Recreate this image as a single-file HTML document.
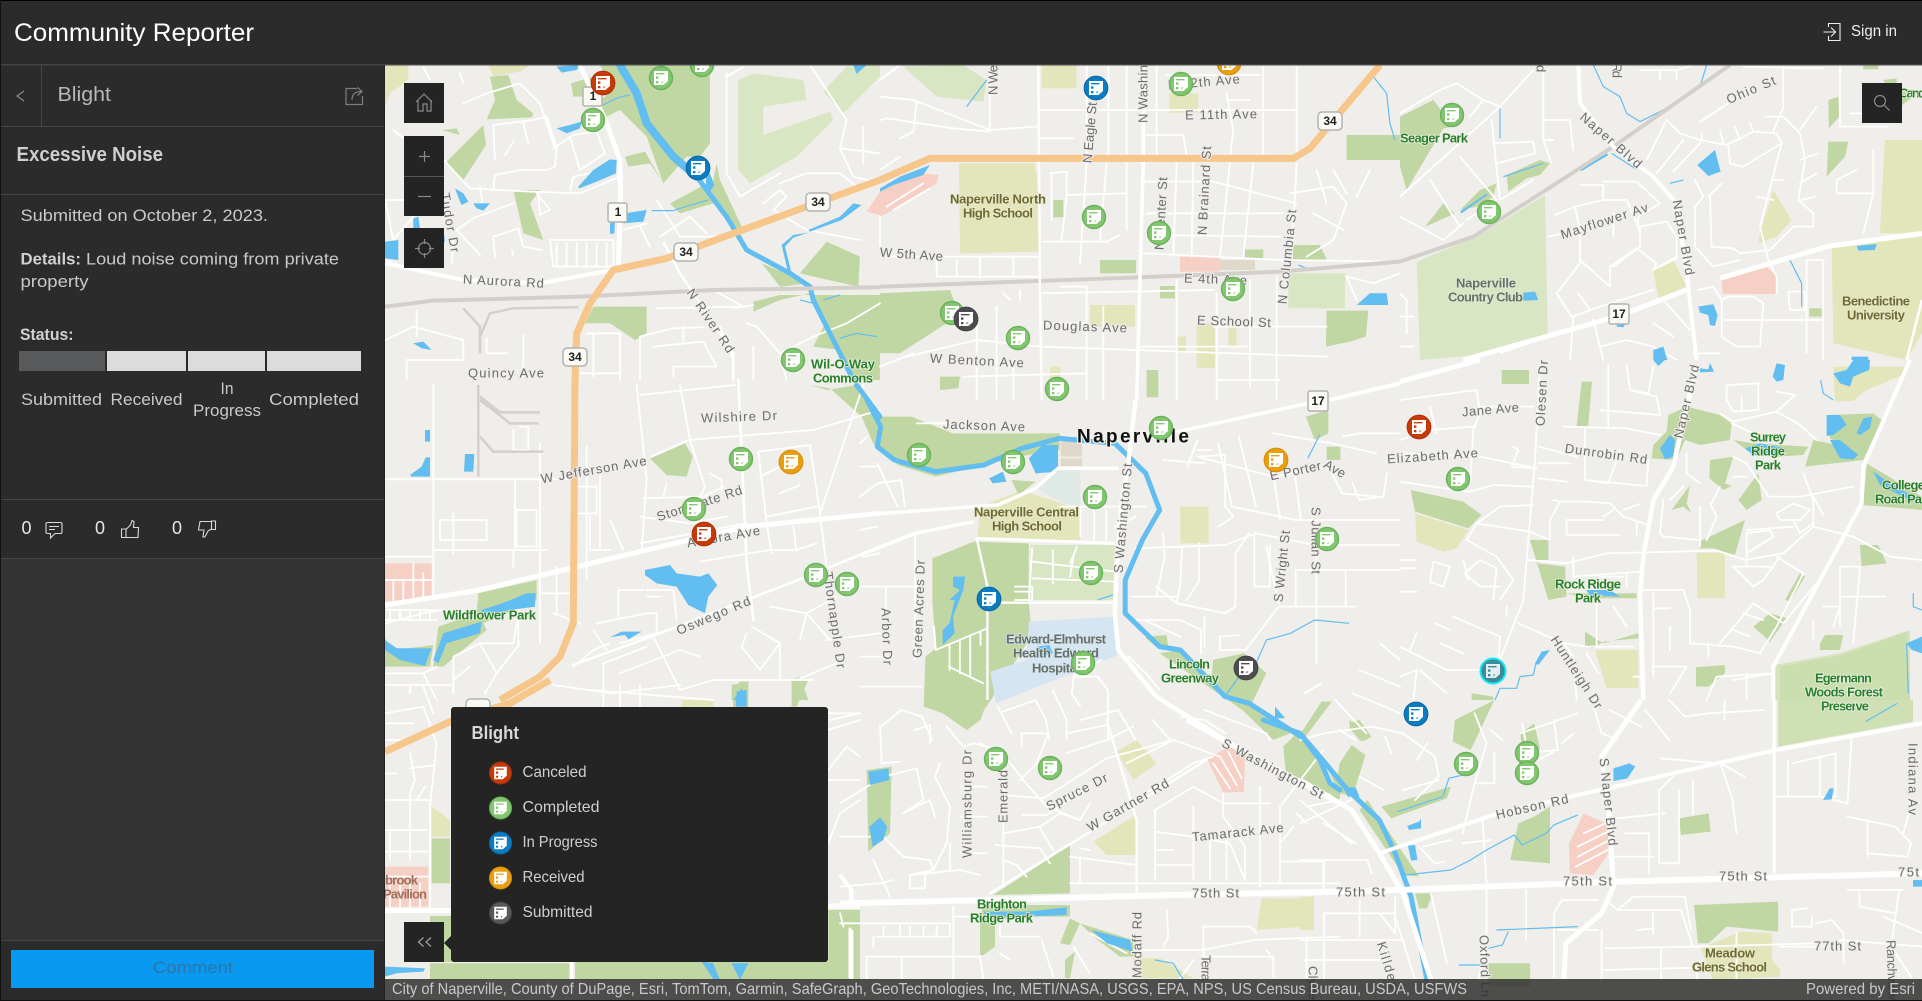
<!DOCTYPE html>
<html><head><meta charset="utf-8"><title>Community Reporter</title>
<style>
html,body{margin:0;padding:0;background:#2b2b2b;overflow:hidden}
svg{display:block}
text{font-family:"Liberation Sans",sans-serif}
#map path{vector-effect:non-scaling-stroke}
.p path{fill:#c1d7a3}.l path{fill:#d9e6c3}.s path{fill:#e3e6bb}.k path{fill:#f6cfc5}
.w path{fill:#62bdf0}
.st path{fill:none;stroke:#62bdf0;stroke-width:1.2;stroke-linejoin:round}
.rv path{fill:none;stroke:#62bdf0;stroke-width:5;stroke-linejoin:round;stroke-linecap:round}
.m path{fill:none;stroke:#fff;stroke-width:1.8;stroke-linejoin:round;stroke-linecap:round}
.r path{fill:none;stroke:#fff;stroke-width:5;stroke-linejoin:round}
.y path{fill:none;stroke:#f7c68b;stroke-width:7;stroke-linejoin:round}
.rl path{fill:none;stroke:#d3d0cb;stroke-width:4;stroke-linejoin:round}
.t{font-size:13px;fill:#6c6c6c;dominant-baseline:central;paint-order:stroke;stroke:#f0eeea;stroke-width:2px;letter-spacing:0}
.gr{font-size:13px;fill:#2a7f2e;font-weight:bold;dominant-baseline:central;paint-order:stroke;stroke:#eef2e4;stroke-width:1.5px}
.ol{font-size:13px;fill:#6f6b30;font-weight:bold;dominant-baseline:central;paint-order:stroke;stroke:#e8ead0;stroke-width:1.5px}
.dk{font-size:13px;fill:#667066;font-weight:bold;dominant-baseline:central;paint-order:stroke;stroke:#e4ebd8;stroke-width:1.5px}
.sh{font-size:12px;font-weight:bold;fill:#222;text-anchor:middle;dominant-baseline:central}
.ui{fill:#c9c9c9;font-size:17px}
.lg{fill:#cfcfcf;font-size:16px}
</style></head><body>
<svg xmlns="http://www.w3.org/2000/svg" width="1922" height="1001" viewBox="0 0 1922 1001">
<defs>
<clipPath id="mc"><rect x="385" y="65" width="1537" height="935"/></clipPath>
<path id="ic" fill="#fff" fill-rule="evenodd" d="M-7,-7H7V3L2.500,7H-7ZM-5,-5H3.500V-3.600H-5ZM-5,-1.600H-2.600V.8H-5ZM-5,3H-2.600V5.200H-5ZM.5,3.500V5.500L2.500,3.500Z"/>
</defs>
<rect width="1922" height="1001" fill="#2b2b2b"/>

<g id="map" clip-path="url(#mc)">
<rect x="385" y="65" width="1537" height="935" fill="#f0eeea"/>

<!-- light green -->
<g class="l">
<g transform="translate(380,60) scale(.3333)"><path d="M1075,60L1120,40L1270,60L1280,120L1150,140L1150,225L1350,155L1360,180L1250,290L1110,370L1075,330Z"/><path d="M1330,95L1400,20L1500,15L1500,50L1390,160Z"/></g>
<g transform="translate(880,60) scale(.3333)"><path d="M70,20L250,15L320,60L310,125L170,110Z"/><path d="M1225,640H1395V745H1225Z"/></g>
<g transform="translate(1400,0) scale(.3333)"><path d="M50,785L250,700L435,585L443,1000L300,1060L60,1080Z"/></g>
<g transform="translate(1400,360) scale(.3333)"><path d="M1125,915L1320,880L1530,810V1020H1125Z" style="fill:#d6e3bd"/><path d="M1140,920L1330,885L1520,815L1530,1020H1140Z" style="fill:#cbdeb0"/></g>
<g transform="translate(1300,700) scale(.3968,.3333)"><path d="M1205,0H1545V65L1205,140Z" style="fill:#cfe0b5"/></g>
<g transform="translate(860,400) scale(.3444,.3333)"><path d="M495,435L740,435V600H495Z"/><path d="M510,265L570,210H640V320L590,310Z" style="fill:#dfeae6"/></g>
</g>

<!-- school -->
<g class="s">
<g transform="translate(380,60) scale(.3333)"><path d="M15,15H85V60L30,100L15,140Z"/><path d="M325,15H450L420,35L340,48Z"/></g>
<g transform="translate(880,60) scale(.3333)"><path d="M485,15H590V85H485Z"/><path d="M868,100H955V158H868Z"/><path d="M237,310H465V320L470,345L480,480V575L240,580Z"/><path d="M630,735H765V800H630Z"/><path d="M950,790H1005V925H950Z"/><path d="M1045,800H1070V860H1045Z"/><path d="M890,830H918V875H890Z"/><path d="M510,920H542V960H510Z"/></g>
<g transform="translate(1400,0) scale(.3333)"><path d="M1455,420H1566V700L1440,700Z"/><path d="M1295,740L1566,710V1000L1520,1080L1300,1030Z"/><path d="M1080,700L1120,570L1175,660L1130,710L1075,730Z"/><path d="M760,810L820,780L860,860L775,895Z"/></g>
<g transform="translate(1400,360) scale(.3333)"><path d="M1300,20H1520V40L1400,90L1360,122L1305,125Z"/><path d="M45,460L205,510L170,565L130,575L50,545Z"/><path d="M890,578H975V715H892Z"/><path d="M585,870H715V985H620Z"/></g>
<g transform="translate(1300,700) scale(.3968,.3333)"><path d="M1010,745L1110,695L1190,700V780L1210,810V830L1040,840Z"/><path d="M0,590H35V690H0Z"/></g>
<g transform="translate(860,400) scale(.3444,.3333)"><path d="M350,320L470,270L640,330V420L340,420Z"/><path d="M930,320H1012V430H930Z"/></g>
<g transform="translate(840,720) scale(.3333)"><path d="M830,95L890,60L950,130L880,180Z"/><path d="M760,365L888,285V405L800,405Z"/><path d="M1265,535H1410L1420,570L1400,620L1250,630Z"/><path d="M880,715H960L1060,775H880Z"/></g>
<g transform="translate(380,680) scale(.3333)"><path d="M905,60H1000V82H905Z"/><path d="M155,380L210,420V470H155Z"/></g>
</g>

<!-- parks -->
<g class="p">
<g transform="translate(380,60) scale(.3333)"><path d="M330,50L385,45L410,120L460,160L455,172L320,178L345,120Z"/><path d="M195,310L310,195L318,255L250,360Z"/><path d="M400,390H480L450,430L490,540L430,520Z"/><path d="M573,70L640,50L620,110L580,110Z"/><path d="M660,15H990V250L960,290L920,290L850,370L800,230L720,150L680,170L650,130L700,90Z"/><path d="M870,430L1000,360L1010,310L1020,360L1090,510L1060,510L1000,430L900,460Z"/><path d="M615,790L640,740H800V820L765,840L690,790Z"/><path d="M1260,640L1340,545L1440,590L1435,680L1300,650Z"/><path d="M1120,725L1200,705H1500V960H1420L1380,870L1300,860L1340,780L1290,700L1200,720L1120,755Z"/><path d="M1145,610L1240,650L1290,670L1200,680Z"/><path d="M735,290L795,275L850,370L810,310L745,320Z"/><path d="M185,210L230,205L240,225Z"/></g>
<g transform="translate(880,60) scale(.3333)"><path d="M520,420H550V472H520Z"/><path d="M660,600H768V640H660Z"/><path d="M840,678H885V715H840Z"/><path d="M1095,568H1150V595H1095Z"/><path d="M1235,555H1320L1340,598L1240,605Z"/><path d="M1400,225H1560V300H1400Z"/><path d="M1340,752H1465L1458,830L1410,845L1338,860Z"/><path d="M0,700L210,690L240,770L200,790L60,880L0,880Z"/><path d="M800,930H835V1012H800Z"/><path d="M180,950H240L235,985L180,990Z"/></g>
<g transform="translate(1400,0) scale(.3333)"><path d="M0,350L100,300L130,340L160,330L160,380L130,385L20,570L0,500Z"/><path d="M320,525L420,480L450,490L420,525L380,535L325,575Z"/><path d="M180,630L240,570L290,550L280,590L230,620Z"/><path d="M75,680L130,610L165,640L100,670Z"/><path d="M1285,300L1315,290L1318,350L1287,385Z"/><path d="M1285,425H1345L1335,470L1280,530Z"/><path d="M1450,240L1490,235L1490,275L1566,270L1500,320Z"/><path d="M1228,925H1265V950H1228Z"/><path d="M1390,195H1435V208H1390Z"/></g>
<g transform="translate(1400,360) scale(.3333)"><path d="M305,30H387V72H305Z"/><path d="M545,65H576L565,198H530Z"/><path d="M805,165L860,140L960,165L995,190L990,240L900,255L855,240L830,300L755,295L760,255L800,215Z"/><path d="M930,300L1000,290L975,370L995,378L970,390L928,355Z"/><path d="M815,450L885,355L870,375L860,430L875,460L850,440Z"/><path d="M1015,420L1075,340L1085,420L1040,450Z"/><path d="M898,545L1035,480L1005,585L940,565L898,565Z"/><path d="M1000,240L1060,250L1225,260L1210,285L1130,290L1060,285Z"/><path d="M1215,320L1240,240L1290,250L1380,295L1290,235L1290,165L1420,160L1445,180L1390,300Z"/><path d="M1400,310L1566,410V450L1390,435Z"/><path d="M32,390L190,425L245,465L205,505L45,455Z"/><path d="M390,540H445V600H410L415,610L495,620L500,710L445,720Z"/><path d="M500,700L710,700V715L560,715Z"/><path d="M555,815L610,850L715,820V835L610,845L580,865L555,860Z"/><path d="M888,922L975,915V940L925,980H888Z"/><path d="M1380,555H1435L1460,610L1385,618Z"/><path d="M1155,720L1200,640L1215,650L1170,725Z"/><path d="M1060,800L1110,760L1160,775L1110,845Z"/><path d="M1260,850L1275,825L1330,825L1320,870L1260,870Z"/><path d="M215,1000L280,1010V1020H215Z"/></g>
<g transform="translate(1300,700) scale(.3968,.3333)"><path d="M0,130L50,170L140,290L100,280L50,160L0,150Z"/><path d="M125,60L180,110L155,125L125,85Z"/><path d="M100,190L130,135L165,165L135,280L95,230Z"/><path d="M390,60L490,0L430,150L385,125Z"/><path d="M205,320L380,260L370,295L230,355Z"/><path d="M555,100L590,70L605,145L560,150Z"/><path d="M530,480L550,370L590,350L630,320L630,490Z"/><path d="M955,355L1030,340L1035,395L960,405Z"/><path d="M993,615L1205,605V695L1075,680L1030,730H1003Z"/><path d="M475,790H580V860H475Z"/><path d="M290,580H335L320,625L300,625Z"/><path d="M170,300L300,530L260,525L150,330Z"/></g>
<g transform="translate(860,400) scale(.3444,.3333)"><path d="M10,50L150,50L270,100L580,100L580,150L460,170L220,230L110,195L40,130Z"/><path d="M440,240L510,245L460,285Z"/><path d="M210,475L330,425L490,430V610L495,660L490,720L380,900L360,930L350,960L310,990L240,940L185,920L190,770L220,745L210,600Z"/><path d="M1295,50L1360,30L1360,100L1320,120Z"/><path d="M1355,140H1395V180H1355Z"/><path d="M830,710L890,705L895,740L860,740L830,715Z"/><path d="M1025,780L1115,760L1180,820L1140,905L1110,930L870,760L930,750L1020,850Z"/><path d="M1280,1000L1340,905L1370,905L1290,1015Z"/><path d="M1420,970L1450,960L1485,1010L1470,1020H1450Z"/><path d="M1110,900L1250,1000L1200,1020L1100,920Z"/></g>
<g transform="translate(380,380) scale(.3333)"><path d="M810,235L915,190L938,230L920,290L860,285Z"/><path d="M295,640L470,600V660L310,730L320,750L190,860L160,860L175,740L290,700Z"/><path d="M15,775L40,810L160,795L150,860H15Z"/><path d="M1290,15L1340,30L1430,15L1500,110L1500,210L1480,190L1445,110L1350,25Z"/><path d="M1055,930L1080,905H1105V960H1055Z"/><path d="M1235,900L1260,890L1285,960H1235Z"/></g>
<g transform="translate(840,720) scale(.3333)"><path d="M80,150L155,140L150,340L85,395Z"/><path d="M460,525L690,375V520Z"/><path d="M1330,80L1380,30L1470,180L1500,210V250L1470,220L1340,180Z"/><path d="M430,555H690V590L560,590L465,600L465,680L430,705H420V600Z"/><path d="M660,670L690,595L720,610L690,675Z"/><path d="M720,610L880,660L880,710L840,710L760,650Z"/><path d="M675,775V720L705,695L690,775Z"/><path d="M0,650H25V775H0Z"/><path d="M350,0H415L380,30Z"/></g>
<g transform="translate(380,680) scale(.3333)"><path d="M1055,15L1105,5V82H1060Z"/><path d="M1235,0H1285L1250,80H1235Z"/><path d="M155,475H210V610H155Z"/><path d="M150,708H214V846H150Z"/><path d="M150,850H570V900H150Z"/><path d="M585,845H1410V900H585Z"/><path d="M1345,690H1440V900H1345Z"/></g>
</g>

<!-- pink, hospital, tan -->
<g class="k">
<g transform="translate(380,60) scale(.3333)"><path d="M1460,455L1500,395V465Z"/></g>
<g transform="translate(880,60) scale(.3333)"><path d="M900,590H1020V635H900Z"/><path d="M1020,600H1125V630H1020Z" style="fill:#e0d8c8"/><path d="M0,390L130,340L175,345L170,370L80,430L0,470Z"/></g>
<g transform="translate(1400,0) scale(.3333)"><path d="M965,840L1100,800L1130,830V882H968Z"/></g>
<g transform="translate(1300,700) scale(.3968,.3333)"><path d="M715,340L780,375L775,465L740,525L680,520L678,430Z"/></g>
<g transform="translate(860,400) scale(.3444,.3333)"><path d="M490,665L740,650L750,765L395,910L378,815L485,780Z" style="fill:#d5e5f2"/><path d="M583,122H645V170H583Z" style="fill:#e0d8cb"/><path d="M583,175H645V198H583Z" style="fill:#e0d8cb"/></g>
<g transform="translate(380,380) scale(.3333)"><path d="M15,550H155V655L15,665Z"/></g>
<g transform="translate(840,720) scale(.3333)"><path d="M1100,115L1170,80L1215,110L1212,215L1150,218Z"/></g>
<g transform="translate(380,680) scale(.3333)"><path d="M15,560H145V680H15Z"/></g>
</g>

<!-- minor roads -->
<g class="m">
<g transform="translate(380,60) scale(.3333)"><path d="M15,600L130,640M40,210L90,250L150,240L200,310L270,385L450,395L600,400L720,350M340,195L460,180L500,170L530,265L525,320L500,330L420,330L345,345L340,390M340,195L345,300M430,190L445,250M400,245L375,285M250,130L320,100L420,70L480,130L525,265M520,265L580,225L650,215L675,280L600,330L570,230M570,390L580,350L680,330M470,400L510,450L480,465L475,400M310,450L300,380M400,430L280,475L230,510L300,585M345,590L340,530L415,505L430,560L485,570M395,570L400,585M220,540L215,610M15,420L190,420M510,540L700,540V620H520ZM530,550V620M560,550V620M590,550V620M620,550V620M650,550V620M680,550V620M780,500L810,560M730,510L800,490M830,420L900,530M900,530H1030M840,530L930,470L980,520M1040,40L1040,340L1080,410L1200,340M1040,50L1090,20M1290,15L1400,180L1380,265L1420,350L1500,370M1200,370L1280,340L1380,340L1430,380M1150,430L1200,390L1220,410L1180,450L1280,510L1440,540M1500,470V560M1380,265L1500,280M1450,200L1450,310M780,960V830L880,805L1020,800L1060,900V960M820,860L970,845L1010,920H880V950M910,800V850M1100,790L1130,800L1200,880L1300,830L1400,790L1500,730M1120,860V960M1200,880L1220,960M1060,745L1120,735M830,745L1080,740M1000,690L1090,740M15,840L100,800L250,840V900H80V960M320,835V880H380M430,825V950M110,750V830M620,820H720V960M640,820V950M600,940H720M130,20L150,60M240,40L250,70M15,420L40,540L100,470"/></g>
<g transform="translate(880,60) scale(.3333)"><path d="M20,440L130,370M40,450L150,385M0,60L60,15M0,110L100,120L330,210L470,200M0,180L20,175L220,205L330,215V15M110,130L100,215L60,235M620,15L620,290M685,15V290M740,15V290M830,15V290M1040,100L1060,210L1050,295M480,150L680,150H1250M480,235H580M800,225H910L920,290M1150,15V290M1250,15V290M860,45H1140M1040,120H1110M620,310L600,610M680,310L660,540M740,310V510M890,310L880,590M940,310L935,590M1050,310L1020,590M1120,310L1090,590M1250,310L1235,600M560,405L740,400M790,365H1000L1250,430M800,460H1210M800,525L1200,530M490,545H680L720,525M1230,400L1360,380L1400,430L1360,540L1280,590M1310,330L1340,430M1360,330L1400,400M1470,330L1430,410M1300,460L1390,510M0,330L60,290M510,340L560,335V405L545,540M515,340V480M0,590H480M170,600V650M230,600V650M300,590V655M400,590V650M170,650H480M790,580L1200,600L1560,605M540,680H620V800M370,700L390,720M420,690V720M480,700L1000,690M0,920L100,880M80,890L290,840L480,860M290,780V900M290,840V1020M350,740V1020M400,900V1020M480,860L1340,890M480,790H620M620,700V1020M670,740V1020M780,860H1100M890,660V1020M1010,700V1020M1110,660V980M1190,650V1020M1000,800L1340,800M250,950L620,940M1010,960H1200M1400,650L1480,670L1560,640M1400,650L1430,720"/></g>
<g transform="translate(1400,0) scale(.3333)"><path d="M120,270L170,250L250,300L300,320L400,210M0,340L120,270M250,300L210,350M300,320L0,590M280,430L400,425L405,460L290,490M275,360L300,600M180,470L290,600L200,660M90,540L180,680M0,650L130,720L190,670M430,360H510L520,450M430,210V420H460M430,420L455,490M300,600L400,540M720,210H830L880,195M830,210V240M780,210V240M1030,200L1210,205H1270M1150,195V320L1120,395M900,365L970,320L1060,260M800,360L740,480M800,360L840,400L900,420L980,435L1060,395L1130,400L1145,430L1030,500L990,490L985,440M850,420L770,520M820,515L900,430M905,400V425M960,390L970,430M1005,380L1020,420M1050,370L1060,395M1095,350H1150L1200,400L1215,480L1195,600L1240,640L1240,680L1180,680L1110,750L1020,760M1145,430L1080,680L1105,780L1130,830V880M1250,320L1200,390M1200,480L1255,460M1200,550L1250,520M1205,600L1245,590M1120,540H1150M1070,590L1120,600M885,540L910,590L885,620V740L940,800L1020,780M930,590L935,740L1000,745L1020,760M965,550L925,590M1320,200V380H1460M1350,340H1450M1420,450V580H1310V540L1370,510M1390,700L1420,580M445,710L540,690V790L470,880L515,950L630,910L760,870M540,780L630,860M630,860V800L710,745L770,790L760,810L830,775M640,800L710,745M525,620L610,600L680,600L720,690V740L640,800M465,645L525,620L540,690M540,555H610V600M610,545H710L780,610L715,650V690M640,640V710M720,680L800,665L830,710V770L760,810M535,880L570,930M895,870L940,860L965,900V1010L1010,1040H1080L1090,910L1060,890H985L965,900M975,960H1270M1165,875H1215V930H1170ZM1270,780H1220V1060M1270,780V1080M0,880L20,900V1000M0,950H40M0,1040H40M440,1010L300,1060M600,1040L680,1020L760,1040L830,1080M520,950L510,1080M580,960L610,1080M790,900L870,990M760,970L820,1010M880,1060H960"/></g>
<g transform="translate(1400,360) scale(.3333)"><path d="M0,120L230,90L240,160L220,210L210,370M90,140L110,220M0,240L90,210L220,200M400,140L240,140M0,365L100,380L210,395L280,375L400,380M340,260L355,270L335,320L405,325M0,280L240,290L410,325M415,260L530,290M415,310H510M415,355L500,365M490,200L680,205L780,225M555,205V360L740,378L745,300M560,360L625,370L660,270M625,15V200M600,150L780,165M680,15L690,90L770,110L780,160M690,90L745,100L760,20M460,420L480,425L560,425L630,430L670,470L745,495M480,425L450,480L450,540L390,515L230,490L200,540L290,590L340,660L300,720M230,490L300,440L400,435M670,450L720,432M610,470L640,450M500,480H610M500,480V525L660,525M710,490V525M420,15L405,300L380,600L370,720L300,900M385,600L500,610L620,580L950,572L1035,600L1150,580L1240,500L1360,530L1470,590L1566,600M190,600L205,660L195,640L240,600L290,625L280,720M195,640L240,680H300M100,605L150,620L130,680L90,665ZM45,600H0M45,625H0M0,695H50M320,740V770M520,590V650L720,635M600,650H670M680,640V680M720,690H850L870,750V850L1000,860L1080,880L1130,800L1210,640L1130,590M760,700V950M760,745H810M810,800V870M925,850V890M960,850L1060,730L1150,790L1250,670M1000,810L1050,830M1030,760L1090,780M1000,620L1060,680L1090,660L1140,590M995,620H1095L1120,625M1040,620V520L1110,510L1120,530L1040,580M1130,460L1180,430L1230,450L1200,480L1140,480ZM1180,480L1200,520L1240,490M1040,510L1180,500M790,420L780,520L790,530L900,540M900,440V560M850,380L810,420M930,430L950,470L920,540M960,380L935,430M1000,350L1040,350M860,280V340M900,370L860,340M1000,290L1040,310L1100,400L1105,410L1200,410L1360,380M1105,240L995,190M960,160L1000,185L1130,155L1200,195L1250,240M1130,155L1185,105L1130,95M980,75L1075,70V150L1000,155L980,120ZM1025,110V150M1210,340L1240,420L1240,500M1240,410L1270,465M1320,620H1380L1360,850M1320,620L1320,800M1320,710H1456M1270,740L1320,740L1300,800M1240,780V840M0,860L140,930L240,930M0,950L50,930L40,1020M60,930L140,1000M105,790L150,810M120,850L190,880M160,770L300,830L295,900M355,790L490,850L520,890L530,1020M50,820L30,870M495,850L560,860L700,860M560,880L595,940M700,950H720M640,740L680,800M590,730V860M1000,960L1120,940M920,1020L950,950L1120,940M760,920L860,920L810,1000M1040,940V1020"/></g>
<g transform="translate(1300,700) scale(.3968,.3333)"><path d="M700,470L780,420M695,500L775,450M700,440L775,395M715,400L770,370M0,120L60,100L180,80L260,100L340,170L350,230L290,300M150,230L210,270M230,160L215,110M295,180L320,130M260,270L350,240M140,120L100,90M0,300L130,430M440,40L470,130L440,250L410,400M555,100L700,40M480,90L510,120M560,70L580,200M640,60L650,150L550,160M490,160V250L440,250M600,180L640,155M690,100L660,130M740,20L760,100L800,120M780,30L860,80M870,30L930,120M930,0L970,50L1030,40L1170,30M1070,0V60M910,175L1000,185L1060,190L1090,300L1100,400M1060,190L1120,230M940,230L905,270V490H955V270M990,240V340M1240,190L1350,160V290H1200M1310,170V290L1380,310L1390,110M1230,180V290M1380,350L1500,380L1540,430L1530,470L1430,460M1430,360V470M1535,340L1520,400M800,355L920,340M820,400H880V520M780,470H890M0,370L130,300M0,480H170L180,520M60,370L140,430M60,480V570M310,440L380,420M410,430L480,420M300,440L340,490L365,485M570,570V720M460,360L470,550V720L450,840M330,580L370,790M240,590V700L200,640M60,640H240M60,640V840M150,600V710M0,720H260M240,650L290,840M10,780H200M640,640L660,600H750M640,640V830M770,600L800,630H960L990,740M800,630L840,590H970L985,690M890,640V700M650,690H750M850,690L890,685M760,690V840M770,745L1000,740L1300,730M910,745V840M765,810L1100,800M1000,800V840M1100,700V840M1210,740H1300M1300,670L1340,660L1370,700V790M1380,570H1520M1410,570V620L1500,640M1510,570L1490,740L1540,830M1470,650L1570,700M1240,630L1280,625M1240,630V680H1290V650M1360,720L1568,740"/></g>
<g transform="translate(860,400) scale(.3444,.3333)"><path d="M0,560H180M0,860H180M160,400V780M75,560V630M0,290L50,250L120,240L130,320M0,770H80M500,445L490,600M560,450V550M620,470L610,530M500,485L740,515M500,535L740,545M630,440L610,490M450,560H500V600H450M450,575H500M215,680L220,750L370,685M260,735V810M290,720V820M320,710V830M350,695V735M258,800L358,850M640,410V320M680,320V420M715,330V420M580,320H830M800,350L740,380M800,445L1060,435L1150,400L1320,435H1568M1190,435V560M1080,320L1265,360H1568M1130,400L1090,460L1090,620L1060,640L920,610L860,560M790,590L860,590H920M880,400L885,470L860,590M935,440L930,550L920,610M985,430V540L950,600M1145,400V560H1190M1270,510H1568M1265,510V620M1410,510V620M1440,620H1215L1120,750H1045V710L1100,705M1325,440V790M1180,440L1215,610M950,200L980,120M980,170L1060,165V320L1085,350L1040,380M1040,130L1080,320M1100,110L1150,320M1200,220L1220,360M1260,200L1280,360M1360,200L1400,280L1500,290M1200,100L1370,130L1500,160M1400,110L1450,100H1568M1430,250L1450,300L1520,290L1530,220M980,170L1200,230L1350,200M800,660L930,660L990,690L990,760M825,660L930,710M1000,650V740M780,770L830,820L870,870M700,780L620,830L615,880L640,920M620,830H690L720,870V1020M560,870L600,960V1020M415,935L510,900L540,960L550,1020M60,980L120,930L180,950L210,1020M400,920L440,1000M640,960L750,930L800,1020M930,950L1000,960L1060,1000M850,960L900,1020M1000,930L1180,1000L1190,1020M1450,810L1568,860M1510,730L1568,780M1430,880L1500,910L1568,940M1380,900L1470,1000M1290,880L1340,850M0,130L20,110M165,70H270M50,190L100,300L110,320M0,200H50M0,390L50,380M880,180L1000,190M980,150L1020,150"/></g>
<g transform="translate(380,380) scale(.3333)"><path d="M15,600H155M40,600V660M70,600V660M100,550V650M130,580V650M160,15V660M15,298H600M15,530H160M405,298V510M160,510H500M400,510V560M480,190V560M530,560V700M620,200V600M770,15L800,300L785,510M780,45L1065,15M900,15L930,180L975,320L940,395M815,230L925,180L1300,150L1500,90M790,355L970,350L1030,320M850,350L860,310M990,280L1025,300V330M780,410L930,430L1040,410M780,490L1100,430M960,545L1170,510L1250,510L1310,490M1135,215L1290,195L1320,400L1340,560M1135,215L1160,430L1175,520M1160,410L1310,380M1240,440L1250,515M1140,290L1200,260M1200,340L1260,315M1450,15L1320,400M800,630H880L890,720M715,630V710M715,630H790M800,650L840,650M650,730L800,700L830,700V760L720,790M580,860L640,810L690,790M640,750L680,810M670,1000V850L800,800M820,770L900,930L1000,900H1300M720,880L900,810L960,830M1100,760L1085,800L1140,870L1200,790V900M1115,740L1200,790M1260,780L1280,700L1170,680M1280,700L1370,650M1280,700L1350,780M1370,850L1250,900M1340,780L1500,760M1450,530L1500,520M1440,620L1500,620M15,880H130L170,860M130,880L170,960M220,940L220,830L300,790L400,790L415,700M270,860L220,900M300,790L350,880L315,940M420,790L350,880M520,700L600,730M15,730L130,700L190,690M20,690H170M15,720H170M30,690V720M60,690V720M90,690V720M120,690V720M150,690V720M415,690V800M480,640L585,640M480,540V790M660,260V500M180,420H320V480H180ZM220,400V520M410,390H470V500H410ZM420,140H445V210H400V150M590,320H650V400H590M690,420L730,510M630,410V510H690"/><path d="M1075,0L1100,550L1120,720" style="stroke-width:2.5"/><path d="M580,855L800,775L1100,660L1280,590L1500,500" style="stroke-width:2.5"/></g>
<g transform="translate(840,720) scale(.3333)"><path d="M1120,130L1170,205M1140,110L1190,195M1165,95L1205,175M120,15L125,130L180,125M225,30L270,15V70M320,20L370,80L400,70L480,90L550,180L620,260L720,300M130,170L230,145L250,240L190,280M300,130L285,170L330,260L320,370L280,450L210,465V505H255V460M330,370V450M420,465L360,450L210,465M420,70L490,110V500M360,200H440M360,290H440M360,400H440M490,225L610,235L745,150L800,115M545,285L620,285L750,200M490,340L600,320L660,280M600,325L640,390M465,375L600,385L630,430M490,420L530,435L560,470M0,250L130,170M190,280L270,240L285,290M0,350L130,350L190,410L270,420L280,450M540,180L590,130L625,40H545V80M680,40L800,15M680,100L800,60L880,20M860,130L1000,60L1140,110M800,115L1000,60M885,240L1060,130L1120,110M945,270L1060,200L1150,250H1290M1060,260V480M945,270V480M945,335L1060,350L1170,370L1215,480M945,390H1000M945,435H1060M690,490H1500M1110,360V480M1160,360V480M1215,380V480M1260,200V500M1150,220V290L1215,380M1320,260L1450,90M1320,260V490M1320,370L1360,320M1370,280L1400,310M1320,425H1450M1450,425V500M1400,260L1500,240M690,410L890,435M720,410V490M720,385L750,390M750,250L720,300L660,280M1280,690L1300,720M480,650H600M480,600V650M340,590H410M340,560V780M110,610H330V650H110M180,610V650M210,620V650M250,620V650M290,620V650M100,650V680M130,620V650M30,625V775M0,610H110M0,580L10,620M80,710H420L430,775M80,710V775M185,710V775M480,700L510,720M605,660L640,770M700,680L750,760M750,640L860,700M1090,620H1230L1250,640M1090,620V775M980,570L985,650L970,680M900,690H1090L1240,660L1500,650M1090,710H1300V770M1400,650V775M1020,775L1060,720M0,470L30,500V540M0,500L120,490L160,480M100,420L150,530"/><path d="M800,0L890,300V530M450,520L1100,120" style="stroke-width:2.4"/></g>
<g transform="translate(380,680) scale(.3333)"><path d="M30,610V680M60,610V680M90,610V680M120,610V680M15,590H145M15,15H210M90,15V40M130,20L160,100M15,100L130,80L170,190M170,190L150,380V700M20,130H100M90,220L105,300L90,340V530M90,265L165,255M135,320L110,360H90M15,360H150M15,450H140M30,450V540M15,515H150M90,450V540M15,280H50M15,180H60M520,15L700,40L900,15M720,15V80M780,15V80M630,30L1000,60M1345,100H1440L1350,120M1345,270L1400,200L1440,230M1345,300H1440M1345,490L1380,400L1440,360M1345,150L1440,120"/></g>
</g>

<!-- streams -->
<g class="st">
<g transform="translate(380,60) scale(.3333)"><path d="M670,135Q710,110 750,105M815,452H880L900,445L985,420M1330,720L1380,705M1260,720L1300,730M1380,835L1430,820L1490,830"/></g>
<g transform="translate(880,60) scale(.3333)"><path d="M260,140L320,60M1480,50L1520,100L1530,190L1545,240M1255,615L1280,625L1350,622"/></g>
<g transform="translate(1400,0) scale(.3333)"><path d="M580,195L610,260L660,290L680,340L720,365L830,310L900,260L920,195M635,460L705,505M300,325V415M310,530L430,490M1170,780L1205,850V920M810,550L850,540"/></g>
<g transform="translate(1400,360) scale(.3333)"><path d="M285,1020L300,985L350,985L360,950L400,945L408,910M1262,60L1270,100L1300,120M1540,700V740L1566,750M1520,850L1525,1000"/></g>
<g transform="translate(1300,700) scale(.3968,.3333)"><path d="M245,335L360,290L375,235L410,225M265,525L380,510L430,480L470,450L540,405L560,435L620,400L640,375L700,345M495,690L700,680M400,795L470,795M475,745L510,735L525,695M1425,65L1505,10"/></g>
<g transform="translate(860,400) scale(.3444,.3333)"><path d="M690,600L735,585M1060,890L1100,830L1150,790L1180,720L1250,700L1320,660L1420,670M1300,175L1335,105"/></g>
<g transform="translate(840,720) scale(.3333)"><path d="M945,720L1000,730L1030,780"/></g>
</g>

<!-- water bodies -->
<g class="w">
<g transform="translate(380,60) scale(.3333)"><path d="M530,20L600,15L590,30L545,38Z"/><path d="M1420,15L1460,15L1430,42Z"/><path d="M530,205L570,195L605,185L600,205L560,220Z"/><path d="M595,380L640,330L690,298L710,300L708,340L650,365L598,385Z"/><path d="M735,460L800,450L790,485L730,490Z"/><path d="M690,490L705,480L703,520L690,522Z"/><path d="M978,350L990,340L1003,375L990,395L978,385Z"/><path d="M225,385L250,400L265,425L245,435L240,425Z"/><path d="M280,430L330,430L310,452L290,445Z"/><path d="M100,475L115,470L120,505L190,505L195,545L160,555L120,530L100,505Z"/><path d="M15,545L55,540L55,600L15,595Z"/><path d="M100,850L130,845L155,870L125,865Z"/><path d="M1285,510L1380,470L1420,430L1445,435L1385,480L1290,515Z"/><path d="M1205,555L1240,525L1285,518L1240,533L1215,560L1235,640L1225,640Z"/></g>
<g transform="translate(880,60) scale(.3333)"><path d="M0,385L60,350L150,315L130,345L40,375L0,395Z"/><path d="M1430,735L1470,700L1520,700L1525,735Z"/></g>
<g transform="translate(1400,0) scale(.3333)"><path d="M540,510L620,460L625,465L545,513Z"/><path d="M180,635L260,580L262,585L185,640Z"/><path d="M892,495L945,450L962,515L925,528Z"/><path d="M370,878L405,875L415,900L370,902Z"/><path d="M1370,738L1430,732L1425,750L1375,752Z"/><path d="M895,920L940,913L953,945L945,978L930,975L925,945L900,938Z"/><path d="M760,1050L790,1040L802,1080L760,1080Z"/><path d="M650,965L690,950L670,982L650,980Z"/><path d="M1355,1070L1405,1070V1080H1355Z"/></g>
<g transform="translate(1400,360) scale(.3333)"><path d="M760,0H795L775,18Z"/><path d="M900,25L925,28L930,8L942,35L900,37Z"/><path d="M1118,50L1130,10L1155,15L1150,60L1130,65Z"/><path d="M1300,40L1340,30L1360,0L1410,0L1408,30L1360,50L1350,80L1320,70Z"/><path d="M780,265L810,225L825,240L820,290L795,298Z"/><path d="M1280,165L1320,165L1340,195L1300,225L1280,228Z"/><path d="M1370,220L1390,175L1417,170L1410,205L1380,225Z"/><path d="M1290,240L1320,240L1375,285L1360,298L1320,295Z"/><path d="M1420,335L1470,370L1560,420L1566,430L1530,420L1440,375Z"/><path d="M1035,265L1080,250L1155,265L1130,290L1060,285Z"/><path d="M558,690L630,690L660,710L570,705Z"/><path d="M405,910L425,875L450,870L415,915Z"/><path d="M1520,850L1566,830V880L1535,870Z"/></g>
<g transform="translate(1300,700) scale(.3968,.3333)"><path d="M790,205L830,190L845,200L825,235L790,243Z"/><path d="M1318,300L1335,265L1345,265L1340,298Z"/><path d="M270,378L300,365L305,355L305,385L275,390Z"/><path d="M272,437L290,435L296,480L280,482Z"/><path d="M110,262L140,262L150,290L120,290Z"/><path d="M1545,540H1568V560H1545Z"/></g>
<g transform="translate(860,400) scale(.3444,.3333)"><path d="M490,175L530,135L575,135L575,215L510,220Z"/><path d="M375,235L415,215L425,245L385,250Z"/><path d="M270,530L305,530L300,570L285,610L270,650L275,700L240,735L240,690L260,670L275,600L260,600L290,570L270,560Z"/><path d="M1205,920L1235,955L1205,955Z"/><path d="M515,740L550,735L560,760L520,770Z"/></g>
<g transform="translate(380,380) scale(.3333)"><path d="M795,570L870,555L890,580L960,590L985,580L1012,615L985,650L975,700L925,675L890,620L830,610L795,585Z"/><path d="M135,150H150V185H135Z"/><path d="M90,285L125,260L137,232H150V290H95Z"/><path d="M255,222H283L280,275H252Z"/><path d="M690,772L725,755H785L745,778L735,765Z"/><path d="M305,690L380,665L440,640L467,640L465,680L390,690L305,710Z"/><path d="M190,760L305,725L300,760L200,790L175,850L160,840Z"/><path d="M15,780L50,805L155,805L135,858L60,840L15,810Z"/><path d="M1060,960L1085,925L1100,960Z"/></g>
<g transform="translate(840,720) scale(.3333)"><path d="M85,155L145,145L148,180L90,195Z"/><path d="M88,320L120,292L142,320L130,360L98,380Z"/><path d="M430,575L560,575L680,562L680,585L560,590L440,590Z"/><path d="M755,630L870,660L878,695L800,670Z"/></g>
<g transform="translate(380,680) scale(.3333)"><path d="M965,845L1000,850L1020,900L1000,897Z"/><path d="M1055,850L1105,850L1080,900Z"/><path d="M1070,35L1100,30L1100,80L1068,80Z"/><path d="M15,860L135,865L130,875L50,880L15,890Z"/></g>
</g>

<!-- river -->
<g class="rv">
<g transform="translate(380,60) scale(.3333)"><path d="M720,15L770,100L800,190L880,290L950,350" style="stroke-width:8"/><path d="M950,350L1040,470L1100,570L1230,640L1290,680L1300,720L1340,800L1420,960"/></g>
<g transform="translate(380,380) scale(.3333)"><path d="M1430,15L1500,110"/></g>
<g transform="translate(860,400) scale(.3444,.3333)"><path d="M20,0L60,80L50,140L100,180L220,215L360,195L470,145L580,115L740,130L830,220L870,330L820,420L770,540L770,640L870,740L930,750L1060,890L1130,910L1280,1010" /></g>
<g transform="translate(840,720) scale(.3333)"><path d="M1270,0L1380,40L1440,120L1470,190L1500,210"/></g>
<g transform="translate(1300,700) scale(.3968,.3333)"><path d="M0,100L50,170L120,270L200,360L240,460L280,590L320,840"/></g>
</g>

<!-- rail -->
<g class="rl">
<g transform="translate(380,60) scale(.3333)"><path d="M15,740L160,722L600,710L1000,690L1500,682"/><path d="M300,880L300,800L250,745M300,830L330,760L400,745L595,742" style="stroke-width:2.5"/></g>
<g transform="translate(380,380) scale(.3333)"><path d="M295,15V290M300,60L390,130H475M300,50L360,97H480M300,170L340,215H490" style="stroke-width:2.5"/></g>
<g transform="translate(880,60) scale(.3333)"><path d="M0,680L700,655L1200,635L1560,605"/></g>
<g transform="translate(1400,0) scale(.3333)"><path d="M0,785L220,710L640,440L990,195"/></g>
</g>

<!-- major roads -->
<g class="r">
<g transform="translate(380,60) scale(.3333)"><path d="M600,15L680,190L720,300L722,420L715,620"/><path d="M15,610L250,660L480,670L700,630" style="stroke-width:4"/><path d="M850,545L900,640L1060,880V960" style="stroke-width:2.4"/></g>
<g transform="translate(880,60) scale(.3333)"><path d="M790,15L790,300L770,1020" style="stroke-width:3.5"/><path d="M475,15L480,700L485,1020" style="stroke-width:2.4"/><path d="M1350,1020L1560,970" style="stroke-width:4"/></g>
<g transform="translate(1400,0) scale(.3333)"><path d="M190,1080L650,950L860,870"/><path d="M960,835L1280,740L1566,700"/><path d="M535,195L540,310L640,440L760,530L830,610L860,820L890,1080" style="stroke-width:4"/><path d="M1566,900L1520,1080" style="stroke-width:2.5"/></g>
<g transform="translate(1400,360) scale(.3333)"><path d="M0,65L240,0"/><path d="M890,15L840,230L820,320L760,420L730,590L720,700L730,1020" style="stroke-width:4.5"/><path d="M1530,0L1390,320L1385,430L1120,920V1020" style="stroke-width:4"/></g>
<g transform="translate(1300,700) scale(.3968,.3333)"><path d="M0,240L130,330L200,460L260,580L330,840"/><path d="M200,460L500,340L700,285L1200,150L1568,70" style="stroke-width:4"/><path d="M0,578L250,570L800,545L1568,520" style="stroke-width:6"/><path d="M860,0L760,170L780,360L790,560L760,640L670,730L665,840"/><path d="M1195,0V520" style="stroke-width:3"/></g>
<g transform="translate(860,400) scale(.3444,.3333)"><path d="M800,0L780,180L760,300L745,500L740,640L750,750L860,890L1060,1020" style="stroke-width:4.5"/><path d="M900,100L1300,10" style="stroke-width:3.5"/><path d="M0,345L400,315L510,265L575,205L750,205" style="stroke-width:3.5"/><path d="M0,465L160,400L330,365" style="stroke-width:3.5"/><path d="M335,415L740,430" style="stroke-width:3"/><path d="M410,608H740" style="stroke-width:2.4"/><path d="M340,420L370,560V900" style="stroke-width:2.4"/></g>
<g transform="translate(380,380) scale(.3333)"><path d="M15,675L300,630L590,560L800,510L1100,440L1500,400"/></g>
<g transform="translate(840,720) scale(.3333)"><path d="M1040,0L1500,250"/><path d="M0,550L450,540L1000,525L1500,515" style="stroke-width:6"/><path d="M0,465L35,510V545" style="stroke-width:4"/><path d="M30,625V775" style="stroke-width:3"/></g>
<g transform="translate(380,680) scale(.3333)"><path d="M15,692H214"/><path d="M1345,678H1440"/><path d="M574,846V897M1415,750V897" style="stroke-width:3.5"/></g>
</g>

<!-- highway -->
<g class="y">
<g transform="translate(380,60) scale(.3333)"><path d="M585,960L590,820L630,730L700,630L860,595L1060,520L1280,440L1500,360"/></g>
<g transform="translate(880,60) scale(.3333)"><path d="M0,360L150,295L600,295L1240,295L1290,265L1500,15"/></g>
<g transform="translate(380,380) scale(.3333)"><path d="M585,0L580,730L540,830L480,890L360,960"/></g>
<g transform="translate(380,680) scale(.3333)"><path d="M510,0L390,70L210,125L15,215"/></g>
</g>

<!-- shields -->
<g fill="#fbf9f3" stroke="#b3b3b3" stroke-width="1.5">
<rect x="583" y="87" width="19" height="19" rx="2"/><rect x="608" y="203" width="19" height="19" rx="2"/><rect x="1609" y="304" width="20" height="20" rx="2"/><rect x="1308" y="391" width="20" height="20" rx="2"/>
<rect x="806" y="193" width="24" height="18" rx="4"/><rect x="674" y="243" width="24" height="18" rx="4"/><rect x="563" y="348" width="24" height="18" rx="4"/><rect x="1318" y="112" width="24" height="18" rx="4"/><rect x="466" y="699" width="24" height="18" rx="4"/>
</g>
<text class="sh" x="593" y="96">1</text><text class="sh" x="618" y="212">1</text><text class="sh" x="1619" y="314">17</text><text class="sh" x="1318" y="401">17</text>
<text class="sh" x="818" y="202">34</text><text class="sh" x="686" y="252">34</text><text class="sh" x="575" y="357">34</text><text class="sh" x="1330" y="121">34</text>

<!-- road labels -->
<text class="t" transform="translate(445,193)rotate(80)" textLength="60">Tudor Dr</text>
<text class="t" transform="translate(463,279)rotate(3)" textLength="81">N Aurora Rd</text>
<text class="t" transform="translate(690,290)rotate(56)" textLength="74">N River Rd</text>
<text class="t" transform="translate(468,373)" textLength="76">Quincy Ave</text>
<text class="t" transform="translate(993,95)rotate(-90)" textLength="30">N We</text>
<text class="t" transform="translate(1087,163)rotate(-85)" textLength="61">N Eagle St</text>
<text class="t" transform="translate(1143,123)rotate(-90)" textLength="58">N Washin</text>
<text class="t" transform="translate(1168,85)rotate(-5)" textLength="72">E 12th Ave</text>
<text class="t" transform="translate(1185,115)rotate(-1)" textLength="72">E 11th Ave</text>
<text class="t" transform="translate(1159,250)rotate(-87)" textLength="73">N Center St</text>
<text class="t" transform="translate(1202,235)rotate(-87)" textLength="89">N Brainard St</text>
<text class="t" transform="translate(1282,304)rotate(-84)" textLength="95">N Columbia St</text>
<text class="t" transform="translate(880,252)rotate(4)" textLength="63">W 5th Ave</text>
<text class="t" transform="translate(1184,278)rotate(2)" textLength="63">E 4th Ave</text>
<text class="t" transform="translate(1197,320)rotate(2)" textLength="74">E School St</text>
<text class="t" transform="translate(1043,325)rotate(2)" textLength="84">Douglas Ave</text>
<text class="t" transform="translate(930,358)rotate(3)" textLength="94">W Benton Ave</text>
<text class="t" transform="translate(1727,100)rotate(-23)" textLength="52">Ohio St</text>
<text class="t" transform="translate(1582,115)rotate(41)" textLength="77">Naper Blvd</text>
<text class="t" transform="translate(1677,200)rotate(80)" textLength="76">Naper Blvd</text>
<text class="t" transform="translate(1561,235)rotate(-18)" textLength="91">Mayflower Av</text>
<text class="t" transform="translate(1617,63)rotate(90)" textLength="15">Rd</text>
<text class="t" transform="translate(1541,65)rotate(90)" textLength="8">d</text>
<text class="t" transform="translate(1462,412)rotate(-5)" textLength="57">Jane Ave</text>
<text class="t" transform="translate(1387,459)rotate(-4)" textLength="91">Elizabeth Ave</text>
<text class="t" transform="translate(1540,426)rotate(-87)" textLength="66">Olesen Dr</text>
<text class="t" transform="translate(1565,448)rotate(8)" textLength="83">Dunrobin Rd</text>
<text class="t" transform="translate(1678,438)rotate(-77)" textLength="75">Naper Blvd</text>
<text class="t" transform="translate(1554,637)rotate(57)" textLength="84">Huntleigh Dr</text>
<text class="t" transform="translate(1604,758)rotate(84)" textLength="88">S Naper Blvd</text>
<text class="t" transform="translate(1496,815)rotate(-13)" textLength="74">Hobson Rd</text>
<text class="t" x="1336" y="892" textLength="49">75th St</text>
<text class="t" x="1563" y="881" textLength="49">75th St</text>
<text class="t" x="1719" y="876" textLength="48">75th St</text>
<text class="t" x="1898" y="872" textLength="21">75t</text>
<text class="t" transform="translate(1913,743)rotate(90)" textLength="72">Indiana Av</text>
<text class="t" x="1814" y="946" textLength="47">77th St</text>
<text class="t" transform="translate(1891,940)rotate(88)" textLength="60">Ranchview</text>
<text class="t" transform="translate(1484,935)rotate(88)" textLength="62">Oxford Ln</text>
<text class="t" transform="translate(1381,942)rotate(73)" textLength="55">Killdeer</text>
<text class="t" transform="translate(1313,966)rotate(90)" textLength="34">Clyde</text>
<text class="t" transform="translate(943,424)rotate(2)" textLength="82">Jackson Ave</text>
<text class="t" transform="translate(1118,573)rotate(-85)" textLength="110">S Washington St</text>
<text class="t" transform="translate(1270,476)rotate(-12)" textLength="52">E Porter</text>
<text class="t" transform="translate(1325,463)rotate(30)" textLength="23">Ave</text>
<text class="t" transform="translate(1278,602)rotate(-84)" textLength="72">S Wright St</text>
<text class="t" transform="translate(1316,507)rotate(90)" textLength="67">S Julian St</text>
<text class="t" transform="translate(917,658)rotate(-88)" textLength="98">Green Acres Dr</text>
<text class="t" transform="translate(886,608)rotate(88)" textLength="57">Arbor Dr</text>
<text class="t" transform="translate(541,479)rotate(-10)" textLength="107">W Jefferson Ave</text>
<text class="t" transform="translate(701,418)rotate(-2)" textLength="76">Wilshire Dr</text>
<text class="t" transform="translate(657,517)rotate(-18)" textLength="89">Stonegate Rd</text>
<text class="t" transform="translate(687,543)rotate(-10)" textLength="74">Aurora Ave</text>
<text class="t" transform="translate(677,631)rotate(-23)" textLength="79">Oswego Rd</text>
<text class="t" transform="translate(828,572)rotate(82)" textLength="97">Thornapple Dr</text>
<text class="t" transform="translate(967,858)rotate(-90)" textLength="108">Williamsburg Dr</text>
<text class="t" transform="translate(1003,823)rotate(-90)" textLength="53">Emerald</text>
<text class="t" transform="translate(1047,807)rotate(-27)" textLength="67">Spruce Dr</text>
<text class="t" transform="translate(1088,828)rotate(-30)" textLength="92">W Gartner Rd</text>
<text class="t" transform="translate(1223,742)rotate(28)" textLength="113">S Washington St</text>
<text class="t" transform="translate(1192,837)rotate(-6)" textLength="92">Tamarack Ave</text>
<text class="t" x="1192" y="893" textLength="47">75th St</text>
<text class="t" transform="translate(1137,978)rotate(-90)" textLength="66">Modaff Rd</text>
<text class="t" transform="translate(1206,955)rotate(90)" textLength="26">Terra</text>

<!-- place labels -->
<text x="1077" y="437" font-size="19" font-weight="bold" fill="#111" textLength="112" style="dominant-baseline:central;paint-order:stroke;stroke:#f4f2ee;stroke-width:2.5px">Naperville</text>
<text class="gr" x="811" y="364" textLength="64">Wil-O-Way</text>
<text class="gr" x="813" y="378" textLength="60">Commons</text>
<text class="gr" x="1400" y="138" textLength="68">Seager Park</text>
<text class="gr" x="1899" y="93" textLength="26">Canc</text>
<text class="gr" x="1750" y="437" textLength="36">Surrey</text>
<text class="gr" x="1751" y="451" textLength="34">Ridge</text>
<text class="gr" x="1755" y="465" textLength="26">Park</text>
<text class="gr" x="1882" y="485" textLength="43">College</text>
<text class="gr" x="1875" y="499" textLength="47">Road Pa</text>
<text class="gr" x="1555" y="584" textLength="66">Rock Ridge</text>
<text class="gr" x="1575" y="598" textLength="26">Park</text>
<text class="gr" x="1815" y="678" textLength="57">Egermann</text>
<text class="gr" x="1805" y="692" textLength="78">Woods Forest</text>
<text class="gr" x="1821" y="706" textLength="48">Preserve</text>
<text class="gr" x="443" y="615" textLength="93">Wildflower Park</text>
<text class="gr" x="1169" y="664" textLength="41">Lincoln</text>
<text class="gr" x="1161" y="678" textLength="58">Greenway</text>
<text class="gr" x="977" y="904" textLength="50">Brighton</text>
<text class="gr" x="970" y="918" textLength="63">Ridge Park</text>
<text class="ol" x="950" y="199" textLength="96">Naperville North</text>
<text class="ol" x="963" y="213" textLength="70">High School</text>
<text class="ol" x="1842" y="301" textLength="68">Benedictine</text>
<text class="ol" x="1847" y="315" textLength="58">University</text>
<text class="ol" x="1705" y="953" textLength="50">Meadow</text>
<text class="ol" x="1692" y="967" textLength="75">Glens School</text>
<text class="ol" x="974" y="512" textLength="105">Naperville Central</text>
<text class="ol" x="992" y="526" textLength="70">High School</text>
<text class="dk" x="1456" y="283" textLength="60">Naperville</text>
<text class="dk" x="1448" y="297" textLength="75">Country Club</text>
<text class="dk" x="1006" y="639" textLength="100" style="stroke:#d5e5f2">Edward-Elmhurst</text>
<text class="dk" x="1013" y="653" textLength="86" style="stroke:#d5e5f2">Health Edward</text>
<text class="dk" x="1032" y="668" textLength="48" style="stroke:#d5e5f2">Hospital</text>
<text x="385" y="880" font-size="13" font-weight="bold" fill="#a0705a" textLength="33" style="dominant-baseline:central">brook</text>
<text x="383" y="894" font-size="13" font-weight="bold" fill="#a0705a" textLength="44" style="dominant-baseline:central">Pavilion</text>

<!-- markers -->
<g id="mk">
<g fill="#c63a08" stroke="#b23206" stroke-width="1.2">
<g transform="translate(603,83)"><circle r="11.8"/><use href="#ic" stroke="none"/></g>
<g transform="translate(1419,427)"><circle r="11.8"/><use href="#ic" stroke="none"/></g>
<g transform="translate(704,534)"><circle r="11.8"/><use href="#ic" stroke="none"/></g>
</g>
<g fill="#82c670" stroke="#69b25a" stroke-width="1.4">
<g transform="translate(661,78)"><circle r="11.5"/><use href="#ic" stroke="none"/></g>
<g transform="translate(702,65)"><circle r="11.5"/><use href="#ic" stroke="none"/></g>
<g transform="translate(593,120)"><circle r="11.5"/><use href="#ic" stroke="none"/></g>
<g transform="translate(793,360)"><circle r="11.5"/><use href="#ic" stroke="none"/></g>
<g transform="translate(1181,84)"><circle r="11.5"/><use href="#ic" stroke="none"/></g>
<g transform="translate(1094,217)"><circle r="11.5"/><use href="#ic" stroke="none"/></g>
<g transform="translate(1159,233)"><circle r="11.5"/><use href="#ic" stroke="none"/></g>
<g transform="translate(1233,289)"><circle r="11.5"/><use href="#ic" stroke="none"/></g>
<g transform="translate(952,313)"><circle r="11.5"/><use href="#ic" stroke="none"/></g>
<g transform="translate(1018,338)"><circle r="11.5"/><use href="#ic" stroke="none"/></g>
<g transform="translate(1057,389)"><circle r="11.5"/><use href="#ic" stroke="none"/></g>
<g transform="translate(1452,115)"><circle r="11.5"/><use href="#ic" stroke="none"/></g>
<g transform="translate(1489,212)"><circle r="11.5"/><use href="#ic" stroke="none"/></g>
<g transform="translate(1458,479)"><circle r="11.5"/><use href="#ic" stroke="none"/></g>
<g transform="translate(1466,764)"><circle r="11.5"/><use href="#ic" stroke="none"/></g>
<g transform="translate(1527,753)"><circle r="11.5"/><use href="#ic" stroke="none"/></g>
<g transform="translate(1527,773)"><circle r="11.5"/><use href="#ic" stroke="none"/></g>
<g transform="translate(1161,428)"><circle r="11.5"/><use href="#ic" stroke="none"/></g>
<g transform="translate(919,455)"><circle r="11.5"/><use href="#ic" stroke="none"/></g>
<g transform="translate(1013,462)"><circle r="11.5"/><use href="#ic" stroke="none"/></g>
<g transform="translate(1095,497)"><circle r="11.5"/><use href="#ic" stroke="none"/></g>
<g transform="translate(1327,539)"><circle r="11.5"/><use href="#ic" stroke="none"/></g>
<g transform="translate(1091,573)"><circle r="11.5"/><use href="#ic" stroke="none"/></g>
<g transform="translate(1083,663)"><circle r="11.5"/><use href="#ic" stroke="none"/></g>
<g transform="translate(741,459)"><circle r="11.5"/><use href="#ic" stroke="none"/></g>
<g transform="translate(694,509)"><circle r="11.5"/><use href="#ic" stroke="none"/></g>
<g transform="translate(816,575)"><circle r="11.5"/><use href="#ic" stroke="none"/></g>
<g transform="translate(847,584)"><circle r="11.5"/><use href="#ic" stroke="none"/></g>
<g transform="translate(996,759)"><circle r="11.5"/><use href="#ic" stroke="none"/></g>
<g transform="translate(1050,768)"><circle r="11.5"/><use href="#ic" stroke="none"/></g>
</g>
<g fill="#0a7cc2" stroke="#0a6aa8" stroke-width="1.2">
<g transform="translate(698,168)"><circle r="11.8"/><use href="#ic" stroke="none"/></g>
<g transform="translate(1096,88)"><circle r="11.8"/><use href="#ic" stroke="none"/></g>
<g transform="translate(1416,714)"><circle r="11.8"/><use href="#ic" stroke="none"/></g>
<g transform="translate(989,599)"><circle r="11.8"/><use href="#ic" stroke="none"/></g>
</g>
<g fill="#e99f10" stroke="#d48f0c" stroke-width="1.2">
<g transform="translate(1229,63)"><circle r="11.8"/><use href="#ic" stroke="none"/></g>
<g transform="translate(1276,460)"><circle r="11.8"/><use href="#ic" stroke="none"/></g>
<g transform="translate(791,462)"><circle r="11.8"/><use href="#ic" stroke="none"/></g>
</g>
<g fill="#4d4d4f" stroke="#444" stroke-width="1.2">
<g transform="translate(966,319)"><circle r="11.8"/><use href="#ic" stroke="none"/></g>
<g transform="translate(1246,668)"><circle r="11.8"/><use href="#ic" stroke="none"/></g>
</g>
<g transform="translate(1493,671)" fill="#3c8a9a" stroke="#12e8f0" stroke-width="2"><circle r="12.5"/><use href="#ic" stroke="none" style="opacity:.85"/></g>
</g>

<!-- map buttons -->
<g fill="#242424">
<rect x="404" y="83" width="40" height="40"/>
<rect x="404" y="136" width="40" height="80"/>
<rect x="404" y="228" width="40" height="40"/>
<rect x="1862" y="83" width="40" height="40"/>
<rect x="404" y="922" width="40" height="40"/>
</g>
<rect x="404" y="176" width="40" height="1" fill="#555"/>
<g fill="none" stroke="#8a8a8a" stroke-width="1.2">
<path d="M416,102L424,94L432,102M418,100V111H423V104H427V111H431V100"/>
<path d="M419,156.500H430M424.500,151V162"/>
<path d="M418,196.500H431"/>
<circle cx="424.500" cy="248.500" r="6"/><path d="M424.500,239V244M424.500,253V258M415,248.500H420M429,248.500H434"/>
<circle cx="1880" cy="101" r="5.500"/><path d="M1884,105L1889.500,110.500"/>
<path d="M423.500,937.500L418.500,942L423.500,946.500M431,937.500L426,942L431,946.500" stroke="#a0a0a0"/>
</g>

<!-- legend -->
<path d="M444,943L451,936V950Z" fill="#242424"/>
<rect x="451" y="707" width="377" height="255" rx="3" fill="#242424"/>
<text x="471.500" y="739" font-size="18" font-weight="bold" fill="#d8d8d8" textLength="47.500" lengthAdjust="spacingAndGlyphs">Blight</text>
<g transform="translate(500.500,773)" fill="#c63a08" stroke="#a52f06" stroke-width="1"><circle r="11"/><use href="#ic" stroke="none" transform="scale(.9)"/></g>
<g transform="translate(500.500,808)" fill="#82c670" stroke="#69b25a" stroke-width="1"><circle r="11"/><use href="#ic" stroke="none" transform="scale(.9)"/></g>
<g transform="translate(500.500,843)" fill="#0a7cc2" stroke="#0a6aa8" stroke-width="1"><circle r="11"/><use href="#ic" stroke="none" transform="scale(.9)"/></g>
<g transform="translate(500.500,878)" fill="#e99f10" stroke="#d48f0c" stroke-width="1"><circle r="11"/><use href="#ic" stroke="none" transform="scale(.9)"/></g>
<g transform="translate(500.500,913)" fill="#58585a" stroke="#444" stroke-width="1"><circle r="11"/><use href="#ic" stroke="none" transform="scale(.9)"/></g>
<text class="lg" x="522.500" y="777" textLength="64" lengthAdjust="spacingAndGlyphs">Canceled</text>
<text class="lg" x="522.500" y="812" textLength="77" lengthAdjust="spacingAndGlyphs">Completed</text>
<text class="lg" x="522.500" y="847" textLength="75" lengthAdjust="spacingAndGlyphs">In Progress</text>
<text class="lg" x="522.500" y="882" textLength="62" lengthAdjust="spacingAndGlyphs">Received</text>
<text class="lg" x="522.500" y="917" textLength="70" lengthAdjust="spacingAndGlyphs">Submitted</text>

<!-- attribution -->
<rect x="385" y="979" width="1537" height="21" fill="#323232" fill-opacity=".86"/>
<text x="392" y="994" font-size="16" fill="#c9c9c9" textLength="1075" lengthAdjust="spacingAndGlyphs">City of Naperville, County of DuPage, Esri, TomTom, Garmin, SafeGraph, GeoTechnologies, Inc, METI/NASA, USGS, EPA, NPS, US Census Bureau, USDA, USFWS</text>
<text x="1806" y="994" font-size="16" fill="#c9c9c9" textLength="109" lengthAdjust="spacingAndGlyphs">Powered by Esri</text>
</g>

<!-- header -->
<rect x="0" y="0" width="1922" height="1" fill="#000"/>
<rect x="0" y="64" width="1922" height="1.500" fill="#454545"/>
<text x="14" y="41" font-size="25" fill="#fff" textLength="240" lengthAdjust="spacingAndGlyphs">Community Reporter</text>
<text x="1851" y="36" font-size="16" fill="#eee" textLength="46" lengthAdjust="spacingAndGlyphs">Sign in</text>
<path d="M1828.500,27V23.500H1840V40.500H1828.500V36M1823.500,32H1835.500M1831,27.500L1835.500,32L1831,36.500" fill="none" stroke="#eee" stroke-width="1.100"/>

<!-- side panel -->
<rect x="0" y="0" width="1" height="1001" fill="#111"/>
<rect x="384" y="65" width="1" height="935" fill="#222"/>
<rect x="1" y="126" width="383" height="1" fill="#454545"/>
<rect x="41" y="65" width="1" height="61" fill="#454545"/>
<path d="M24,91L17,96L24,101" fill="none" stroke="#8a8a8a" stroke-width="1.100"/>
<text x="57.500" y="101" font-size="20" fill="#b8b8b8" textLength="53.500" lengthAdjust="spacingAndGlyphs">Blight</text>
<path d="M357,88.500H346V104.500H362.500V96M352,100Q352,91.500 361,91.500M357.500,87.500L362,91.500L357.500,95.500" fill="none" stroke="#7d7d7d" stroke-width="1.200"/>
<text x="16.500" y="161" font-size="20" font-weight="bold" fill="#cfcfcf" textLength="146.500" lengthAdjust="spacingAndGlyphs">Excessive Noise</text>
<rect x="1" y="194" width="383" height="1" fill="#454545"/>
<text class="ui" x="20.500" y="221" textLength="247.500" lengthAdjust="spacingAndGlyphs">Submitted on October 2, 2023.</text>
<text class="ui" x="20.500" y="264.500" font-weight="bold" textLength="60.500" lengthAdjust="spacingAndGlyphs" style="fill:#d0d0d0">Details:</text>
<text class="ui" x="86" y="264.500" textLength="253" lengthAdjust="spacingAndGlyphs">Loud noise coming from private</text>
<text class="ui" x="20.500" y="287" textLength="68" lengthAdjust="spacingAndGlyphs">property</text>
<text class="ui" x="20" y="340" font-weight="bold" textLength="53.500" lengthAdjust="spacingAndGlyphs" style="fill:#d0d0d0">Status:</text>
<rect x="19" y="351" width="86" height="20" fill="#58595b"/>
<rect x="107" y="351" width="79" height="20" fill="#dcdcdc"/>
<rect x="188" y="351" width="77" height="20" fill="#dcdcdc"/>
<rect x="267" y="351" width="94" height="20" fill="#dcdcdc"/>
<text class="ui" x="21" y="405" textLength="81" lengthAdjust="spacingAndGlyphs">Submitted</text>
<text class="ui" x="110.500" y="405" textLength="72" lengthAdjust="spacingAndGlyphs">Received</text>
<text class="ui" x="220.500" y="394" textLength="13" lengthAdjust="spacingAndGlyphs">In</text>
<text class="ui" x="193" y="416" textLength="68" lengthAdjust="spacingAndGlyphs">Progress</text>
<text class="ui" x="269" y="405" textLength="90" lengthAdjust="spacingAndGlyphs">Completed</text>
<rect x="1" y="499" width="383" height="1" fill="#454545"/>
<text x="21.500" y="534" font-size="18" fill="#e6e6e6">0</text>
<text x="95" y="534" font-size="18" fill="#e6e6e6">0</text>
<text x="172" y="534" font-size="18" fill="#e6e6e6">0</text>
<g fill="none" stroke="#d8d8d8" stroke-width="1.100">
<path d="M47.500,522.500H60.500A1.500,1.500 0 0 1 62,524V532A1.500,1.500 0 0 1 60.500,533.500H55L50.500,538V533.500H47.500A1.500,1.500 0 0 1 46,532V524A1.500,1.500 0 0 1 47.500,522.500ZM49,526.500H59M49,529.500H55"/>
<path d="M121.500,529H126V537.500H121.500ZM126,529.500L130.500,525L132,520.500L134,521.500L133.500,527.500H138.500L138,537.500H126"/>
<path d="M211.500,521H215.500V529.500H211.500ZM211.500,521.500H200L198.500,530H204L203,537L205,537L208,531L211.500,529"/>
</g>
<rect x="1" y="558" width="383" height="382" fill="#333"/>
<rect x="1" y="558" width="383" height="1" fill="#454545"/>
<rect x="1" y="940" width="383" height="1" fill="#454545"/>
<rect x="11" y="950" width="363" height="38" fill="#0a99f0"/>
<text x="153" y="973" font-size="17" fill="#2f74a6" textLength="80" lengthAdjust="spacingAndGlyphs">Comment</text>
<rect x="0" y="1000" width="1922" height="1" fill="#111"/>
</svg>
</body></html>
